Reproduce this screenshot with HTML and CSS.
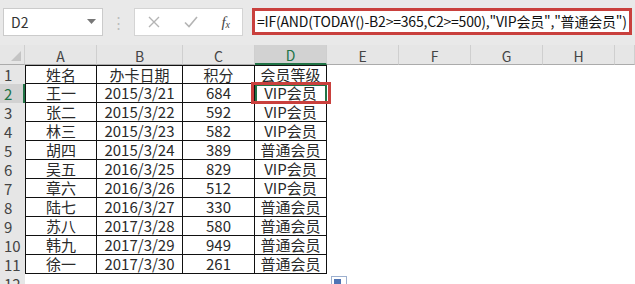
FILE: index.html
```html
<!DOCTYPE html>
<html lang="zh-CN">

<head>
    <meta charset="UTF-8">
    <title>会员等级</title>
    <link rel="stylesheet" href="styles.css">
</head>

<body>
    <div class="bar">
        <div class="namebox">
            <span>D2</span>
            <svg class="caret" width="9" height="5" viewBox="0 0 9 5"><path d="M0 0h9L4.5 5z" fill="#777"/></svg>
        </div>
        <div class="dots">⋮</div>
        <div class="funcbox">
            <svg width="12" height="12" viewBox="0 0 12 12"><path d="M1 1l10 10M11 1L1 11" stroke="#b4b4b4" stroke-width="1.4"/></svg>
            <svg width="14" height="12" viewBox="0 0 14 12"><path d="M1 6.5l4 4L13 1" stroke="#b4b4b4" stroke-width="1.6" fill="none"/></svg>
            <span class="fx">f<sub>x</sub></span>
        </div>
        <div class="formula">=IF(AND(TODAY()-B2&gt;=365,C2&gt;=500),"VIP会员","普通会员")</div>
    </div>

    <div class="sheet" id="sheet"></div>

    <script>
    var data = [
        ['姓名', '办卡日期', '积分', '会员等级'],
        ['王一', '2015/3/21', '684', 'VIP会员'],
        ['张二', '2015/3/22', '592', 'VIP会员'],
        ['林三', '2015/3/23', '582', 'VIP会员'],
        ['胡四', '2015/3/24', '389', '普通会员'],
        ['吴五', '2016/3/25', '829', 'VIP会员'],
        ['章六', '2016/3/26', '512', 'VIP会员'],
        ['陆七', '2016/3/27', '330', '普通会员'],
        ['苏八', '2017/3/28', '580', '普通会员'],
        ['韩九', '2017/3/29', '949', '普通会员'],
        ['徐一', '2017/3/30', '261', '普通会员']
    ]
    var cols = ['A', 'B', 'C', 'D', 'E', 'F', 'G', 'H', '']
    var sheet = document.getElementById('sheet')

    function cell(cls, text) {
        var d = document.createElement('div')
        d.className = cls
        d.textContent = text || ''
        sheet.appendChild(d)
        return d
    }

    // 表头
    cell('corner')
    for (var i = 0; i < cols.length; i++) {
        cell('colhead' + (cols[i] === 'D' ? ' on' : ''), cols[i])
    }
    // 数据行
    for (var r = 0; r < 12; r++) {
        cell('rowhead' + (r === 1 ? ' on' : ''), r + 1)
        for (var c = 0; c < cols.length; c++) {
            var row = data[r]
            if (row && c < 4) {
                var d = cell('td' + (c === 0 ? ' first' : ''), row[c])
                if (r === 1 && c === 3) d.classList.add('active')
            } else {
                cell('empty')
            }
        }
    }
    </script>
    <div class="quick"><span></span></div>
</body>

</html>
```

FILE: styles.css
```css
* {
    margin: 0;
    padding: 0;
    box-sizing: border-box;
}

body {
    width: 635px;
    height: 284px;
    overflow: hidden;
    background: #FFF;
    font-family: "Noto Sans CJK SC", "Noto Sans", sans-serif;
    color: #222;
    position: relative;
}

.bar {
    height: 45px;
    background: #E9E9E9;
    display: flex;
    align-items: flex-start;
    padding: 8px 0 0 3px;
}

.namebox {
    width: 100px;
    height: 28px;
    background: #FFF;
    border: 1px solid #CBCBCB;
    display: flex;
    align-items: center;
    justify-content: space-between;
    padding: 0 6px 0 7px;
    font-size: 14px;
    color: #333;
}

.caret {
    margin-top: -2px;
}

.dots {
    width: 31px;
    text-align: center;
    color: #BDBDBD;
    font-size: 15px;
    line-height: 28px;
}

.funcbox {
    width: 109px;
    height: 28px;
    background: #FFF;
    border: 1px solid #D4D4D4;
    display: flex;
    align-items: center;
    justify-content: space-between;
    padding: 0 12px 0 13px;
}

.fx {
    font-family: "Liberation Serif", serif;
    font-style: italic;
    font-size: 15px;
    color: #444;
}

.fx sub {
    font-size: 10px;
    vertical-align: -1px;
}

.formula {
    margin-left: 9px;
    width: 380px;
    height: 27px;
    border: 3px solid #C9403D;
    background: #FFF;
    font-size: 14px;
    letter-spacing: -0.2px;
    line-height: 20px;
    padding-left: 2px;
    white-space: nowrap;
    color: #111;
}

.sheet {
    display: grid;
    grid-template-columns: 25px 72px 86px 72px 72px 72px 72px 72px 72px 20px;
    grid-template-rows: 20px repeat(12, 19px);
}

.corner,
.colhead,
.rowhead {
    background: #E6E6E6;
    color: #444;
    font-size: 14px;
    display: flex;
    align-items: center;
    justify-content: center;
}

.corner {
    border-bottom: 1px solid #ABABAB;
    border-right: 1px solid #CFCFCF;
    position: relative;
}

.corner:after {
    content: '';
    position: absolute;
    right: 3px;
    bottom: 3px;
    border-left: 10px solid transparent;
    border-bottom: 10px solid #C4C4C4;
}

.colhead {
    border-bottom: 1px solid #ABABAB;
    border-right: 1px solid #CFCFCF;
    line-height: 1;
    padding-top: 2px;
}

.colhead.on {
    background: #D2D2D2;
    color: #217346;
    border-bottom: 2px solid #217346;
}

.rowhead {
    justify-content: flex-start;
    padding-left: 4px;
    font-size: 15px;
    line-height: 1;
}

.rowhead.on {
    background: #D2D2D2;
    border-right: 2px solid #217346;
    color: #217346;
}

.td {
    border-right: 1px solid #111;
    border-bottom: 1px solid #111;
    font-size: 15px;
    text-align: center;
    line-height: 18px;
    white-space: nowrap;
    color: #2A2A2A;
}

.sheet > .td:nth-child(-n+15) {
    border-top: 1px solid #111;
}

.td.first {
    border-left: 1px solid #111;
}

.td.active {
    position: relative;
    outline: 2px solid #217346;
    outline-offset: -2px;
}

.td.active:after {
    content: '';
    position: absolute;
    left: -4px;
    right: -5px;
    top: -2px;
    bottom: -2px;
    border: 3px solid #C9403D;
}

.empty {
    background: #FFF;
}

.quick {
    position: absolute;
    left: 331px;
    top: 276px;
    width: 16px;
    height: 12px;
    border: 1px solid #9DB0CF;
    background: #FFF;
    padding: 2px;
}

.quick span {
    display: block;
    width: 7px;
    height: 6px;
    background: #4F74B5;
}
```
